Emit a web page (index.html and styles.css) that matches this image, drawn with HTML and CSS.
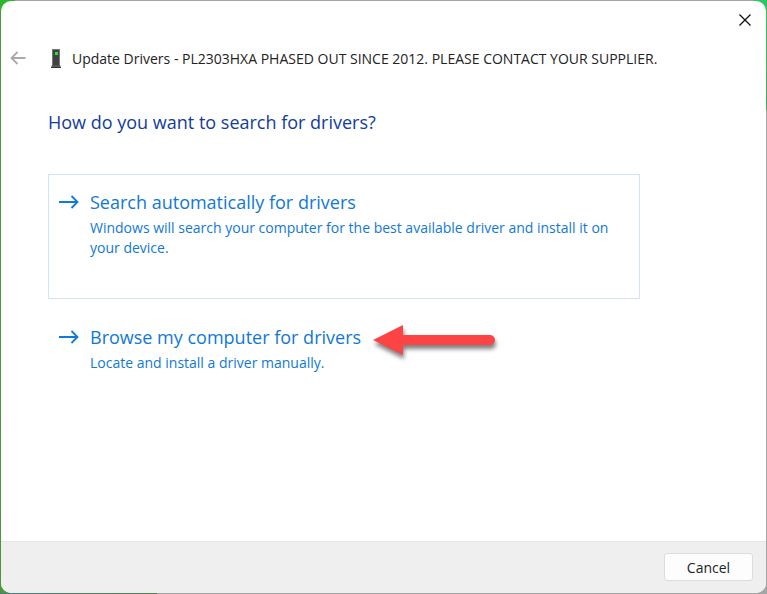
FILE: index.html
```html
<!DOCTYPE html>
<html lang="en">
<head>
    <meta charset="UTF-8">
    <meta name="viewport" content="width=device-width, initial-scale=1.0">
    <title>Update Drivers</title>
    <link rel="stylesheet" href="styles.css">
</head>
<body>

<main class="dialog">
    <div class="title-bar">
        <button class="close-button" type="button" aria-label="Close">
            <svg width="12" height="12" viewBox="0 0 12 12"><path d="M0.5 0.5L11.5 11.5M11.5 0.5L0.5 11.5" stroke="#111" stroke-width="1.3" fill="none"/></svg>
        </button>
    </div>

    <header class="header">
        <button class="back-button" type="button" aria-label="Back" disabled>
            <svg width="16" height="14" viewBox="0 0 16 14"><path d="M15.5 7H1.5M7.5 1L1.5 7L7.5 13" stroke="#a9a9a9" stroke-width="1.8" fill="none"/></svg>
        </button>
        <svg class="device-icon" width="10" height="19" viewBox="0 0 10 19">
            <path d="M1 0H9V16H1Z" fill="#3f4145"/>
            <path d="M1 0.5H9M1.5 0V16M8.5 0V16" stroke="#77797c" fill="none"/>
            <path d="M1 16H9L10 19H0Z" fill="#55585b"/>
            <path d="M0 18.5H10" stroke="#333" fill="none"/>
            <rect x="4" y="3" width="3" height="3" fill="#2be52b"/>
        </svg>
        <span class="title">Update Drivers - PL2303HXA PHASED OUT SINCE 2012. PLEASE CONTACT YOUR SUPPLIER.</span>
    </header>

    <section class="content">
        <h1>How do you want to search for drivers?</h1>

        <button class="option selected" type="button">
            <svg class="option-arrow" width="20" height="16" viewBox="0 0 20 16"><path d="M0 8H19M12.5 2L18.5 8L12.5 14" stroke="#0f7ad8" stroke-width="1.8" fill="none"/></svg>
            <span class="option-text">
                <span class="option-title">Search automatically for drivers</span>
                <span class="option-note">Windows will search your computer for the best available driver and install it on your device.</span>
            </span>
        </button>

        <div class="option-row">
            <button class="option" type="button">
                <svg class="option-arrow" width="20" height="16" viewBox="0 0 20 16"><path d="M0 8H19M12.5 2L18.5 8L12.5 14" stroke="#0f7ad8" stroke-width="1.8" fill="none"/></svg>
                <span class="option-text">
                    <span class="option-title">Browse my computer for drivers</span>
                    <span class="option-note">Locate and install a driver manually.</span>
                </span>
            </button>
            <!-- Callout arrow -->
            <svg class="callout" width="122" height="30" viewBox="0 0 122 30"><path d="M0 15L30 0V10H117A5 5 0 0 1 117 20H30V30Z" fill="#fc4444"/></svg>
        </div>
    </section>

    <footer class="footer">
        <button class="cancel-button" type="button">Cancel</button>
    </footer>
</main>

</body>
</html>
```

FILE: styles.css
```css
* {
    box-sizing: border-box;
}

body {
    margin: 0;
    min-height: 100vh;
    padding: 1px;
    display: flex;
    font-family: "Open Sans", "Noto Sans", sans-serif;
    font-size: 14px;
    background:
        linear-gradient(90deg, #2fb52a 15px, transparent 15px) 0 0 / 100% 10px no-repeat,
        linear-gradient(#2fc562, #48a063) 100% 0 / 14px 110px no-repeat,
        linear-gradient(90deg, #4a7d80, #557d50) 0 100% / 157px 1px no-repeat,
        linear-gradient(#469c35, #4e9637) 0 0 / 14px 100% no-repeat,
        #a5a5a5;
}

button {
    font: inherit;
    padding: 0;
    border: none;
    background: none;
}

svg {
    display: block;
    flex: none;
}

.dialog {
    flex: 1;
    display: flex;
    flex-direction: column;
    background-color: #fff;
    border-radius: 10px;
    overflow: hidden;
}

.title-bar {
    display: flex;
    justify-content: flex-end;
    height: 38px;
}

.close-button {
    width: 42px;
    display: flex;
    align-items: center;
    justify-content: center;
}

.header {
    display: flex;
    align-items: center;
    height: 38px;
    padding-left: 9px;
}

.device-icon {
    margin: 0 11px 0 25px;
}

.title {
    color: #222;
    white-space: nowrap;
}

.content {
    flex: 1;
    padding: 31px 126px 0 47px;
}

h1 {
    margin: 0 0 38px;
    font-size: 18px;
    font-weight: normal;
    line-height: 28px;
    color: #123c9c;
}

.option {
    display: flex;
    width: 100%;
    gap: 11px;
    padding: 13px 28px 13px 10px;
    border: 1px solid transparent;
    text-align: left;
    color: #1079d6;
}

.selected {
    min-height: 125px;
    margin-bottom: 10px;
    border-color: #cfe5f7;
}

.option-arrow {
    margin-top: 6px;
}

.option-title,
.option-note {
    display: block;
}

.option-title {
    font-size: 18px;
    line-height: 28px;
}

.option-note {
    font-size: 14px;
    line-height: 20px;
    margin-top: 2px;
}

.option-row {
    position: relative;
}

.callout {
    position: absolute;
    left: 325px;
    top: 16px;
    overflow: visible;
    filter: drop-shadow(1px 4px 2px rgba(0, 0, 0, 0.5));
}

.footer {
    display: flex;
    justify-content: flex-end;
    padding: 11px 13px 12px;
    background-color: #efefef;
    border-top: 1px solid #e6e6e6;
}

.cancel-button {
    width: 89px;
    height: 28px;
    border: 1px solid #dcdcdc;
    border-radius: 3px;
    background-color: #fdfdfd;
    color: #222;
}
```
